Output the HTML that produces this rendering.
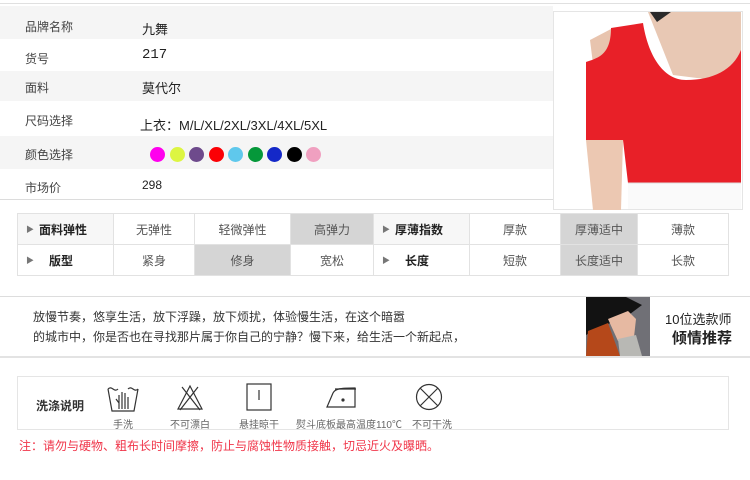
<!DOCTYPE html>
<html><head><meta charset="utf-8"><style>
*{margin:0;padding:0;box-sizing:border-box}
body{width:750px;height:480px;background:#fff;position:relative;overflow:hidden;font-family:"Liberation Sans","Noto Sans CJK SC",sans-serif;color:#333}
.a{position:absolute}
.row{position:absolute;left:0;width:553px}
.lbl{position:absolute;left:25px;font-size:12px;color:#444}
.val{position:absolute;left:142px;font-size:13px;color:#222}
.dot{display:inline-block;width:15px;height:15px;border-radius:50%;margin-right:4.5px}
table{border-collapse:collapse;position:absolute;left:17px;top:213px;width:712px;font-size:12px;color:#555}
td{border:1px solid #e2e2e2;height:31px;text-align:center}
td.h{font-weight:bold;color:#222;text-align:left;padding-left:8px;background:#f7f7f7}
td.g{background:#d5d5d5}
.tri{font-size:8px;color:#777;margin-right:5px;vertical-align:2px}
.ic{position:absolute;top:383px}
.cl{position:absolute;top:416px;font-size:10px;color:#666;white-space:nowrap}
</style></head><body>
<div class="a" style="left:0;top:3px;width:750px;height:1px;background:#e0e0e0"></div>
<div class="row" style="top:6px;height:33px;background:#f5f5f5"></div>
<div class="row" style="top:71px;height:30px;background:#f5f5f5"></div>
<div class="row" style="top:136px;height:33px;background:#f5f5f5"></div>
<div class="a" style="left:0;top:199px;width:553px;height:1px;background:#dcdcdc"></div>
<div class="lbl" style="top:18px">品牌名称</div><div class="val" style="top:19px">九舞</div>
<div class="lbl" style="top:50px">货号</div><div class="val" style="top:47px;font-size:14px;font-family:'Liberation Mono',monospace">217</div>
<div class="lbl" style="top:79px">面料</div><div class="val" style="top:78px">莫代尔</div>
<div class="lbl" style="top:112px">尺码选择</div><div class="val" style="top:115px;left:140px">上衣：M/L/XL/2XL/3XL/4XL/5XL</div>
<div class="lbl" style="top:146px">颜色选择</div>
<div class="a" style="left:150px;top:147px;white-space:nowrap;font-size:0">
<span class="dot" style="background:#ff00ee"></span><span class="dot" style="background:#ddf542"></span><span class="dot" style="background:#6e4a8c"></span><span class="dot" style="background:#fb0005"></span><span class="dot" style="background:#5fc8ec"></span><span class="dot" style="background:#05983a"></span><span class="dot" style="background:#1428c8"></span><span class="dot" style="background:#000"></span><span class="dot" style="background:#f0a0c0"></span></div>
<div class="lbl" style="top:179px">市场价</div><div class="val" style="top:178px;font-size:12px">298</div>
<svg class="a" style="left:553px;top:0" width="197" height="210" viewBox="0 0 197 210">
<rect x="0.5" y="11.5" width="189" height="198" fill="#fff" stroke="#e5e5e5"/>
<path d="M95 12 L188 12 L188 70 L160 80 L120 75 Z" fill="#e8c8b4"/>
<path d="M97 12 L118 12 L104 22 Z" fill="#2a2a2a"/>
<path d="M37 40 L58 29 L58 60 L40 64 Z" fill="#e8c4ae"/>
<path d="M33 62 C45 58 58 55 58 28 L90 23 C95 55 110 80 133 80 C160 80 180 70 188 50 L188 183 L75 183 L70 140 L33 140 Z" fill="#e82028"/>
<path d="M33 140 L70 140 L68 210 L40 210 Z" fill="#ecc8b2"/>
<rect x="75" y="183" width="113" height="26" fill="#fafafa"/>
<line x1="75" y1="183" x2="188" y2="183" stroke="#ddd"/>
</svg>
<table>
<tr><td class="h" style="width:96px"><span class="tri">▶</span>面料弹性</td><td style="width:81px">无弹性</td><td style="width:96px">轻微弹性</td><td class="g" style="width:83px">高弹力</td><td class="h" style="width:96px"><span class="tri">▶</span>厚薄指数</td><td style="width:91px">厚款</td><td class="g" style="width:77px">厚薄适中</td><td>薄款</td></tr>
<tr><td style="text-align:left;padding-left:8px;font-weight:bold;color:#222"><span class="tri">▶</span>&nbsp;&nbsp;&nbsp;版型</td><td>紧身</td><td class="g">修身</td><td>宽松</td><td style="text-align:left;padding-left:8px;font-weight:bold;color:#222"><span class="tri">▶</span>&nbsp;&nbsp;&nbsp;长度</td><td>短款</td><td class="g">长度适中</td><td>长款</td></tr>
</table>
<div class="a" style="left:0;top:296px;width:750px;height:1px;background:#ddd"></div>
<div class="a" style="left:0;top:356px;width:750px;height:2px;background:#e3e3e3"></div>
<div class="a" style="left:33px;top:307px;font-size:12px;color:#333;line-height:20px">放慢节奏，悠享生活，放下浮躁，放下烦扰，体验慢生活，在这个暗嚣<br>的城市中，你是否也在寻找那片属于你自己的宁静？慢下来，给生活一个新起点，</div>
<svg class="a" style="left:586px;top:297px" width="64" height="59"><rect width="64" height="59" fill="#707076"/><path d="M0 0 H40 L56 8 L40 20 L14 30 L0 38Z" fill="#121212"/><path d="M2 34 L22 26 L34 59 L0 59 Z" fill="#b5481a"/><path d="M22 22 L42 14 L50 22 L48 40 L32 44 Z" fill="#e6b9a2"/><path d="M32 42 L50 38 L56 59 L34 59Z" fill="#b8b8b4"/></svg>
<div class="a" style="left:665px;top:309px;font-size:13px;color:#222">10位选款师</div>
<div class="a" style="left:672px;top:327px;font-size:15px;color:#222;font-weight:bold">倾情推荐</div>
<div class="a" style="left:17px;top:376px;width:712px;height:54px;border:1px solid #e5e5e5"></div>
<div class="a" style="left:36px;top:397px;font-size:12px;font-weight:bold;color:#333">洗涤说明</div>
<svg class="ic" style="left:106px" width="34" height="30" viewBox="0 0 34 30" fill="none" stroke="#333" stroke-width="1.2"><path d="M2 6 L6 28 H28 L32 6"/><path d="M2 6 C6 2 8 10 12 6 M22 6 C26 2 28 10 32 6"/><path d="M13 26 V12 M16 26 V9 M19 26 V10 M22 26 V14 M13 20 L10 16"/></svg>
<svg class="ic" style="left:176px" width="28" height="28" fill="none" stroke="#333" stroke-width="1.2"><path d="M14 3 L2 26 H26 Z"/><path d="M6 4 L24 27 M22 4 L4 27"/></svg>
<svg class="ic" style="left:246px" width="26" height="28" fill="none" stroke="#333" stroke-width="1.2"><rect x="1" y="1" width="24" height="26"/><path d="M13 7 V17"/></svg>
<svg class="ic" style="left:325px" width="36" height="26" fill="none" stroke="#333" stroke-width="1.2"><path d="M2 24 L8 10 C10 6 14 5 30 5 V24 Z"/><path d="M10 6 H31"/><circle cx="18" cy="17" r="1" fill="#333"/></svg>
<svg class="ic" style="left:415px" width="28" height="28" fill="none" stroke="#333" stroke-width="1.2"><circle cx="14" cy="14" r="12.5"/><path d="M5 5 L23 23 M23 5 L5 23"/></svg>
<div class="cl" style="left:113px">手洗</div>
<div class="cl" style="left:170px">不可漂白</div>
<div class="cl" style="left:239px">悬挂晾干</div>
<div class="cl" style="left:296px">熨斗底板最高温度110℃</div>
<div class="cl" style="left:412px">不可干洗</div>
<div class="a" style="left:19px;top:437px;font-size:12px;color:#f0364a">注：请勿与硬物、粗布长时间摩擦，防止与腐蚀性物质接触，切忌近火及曝晒。</div>
</body></html>
